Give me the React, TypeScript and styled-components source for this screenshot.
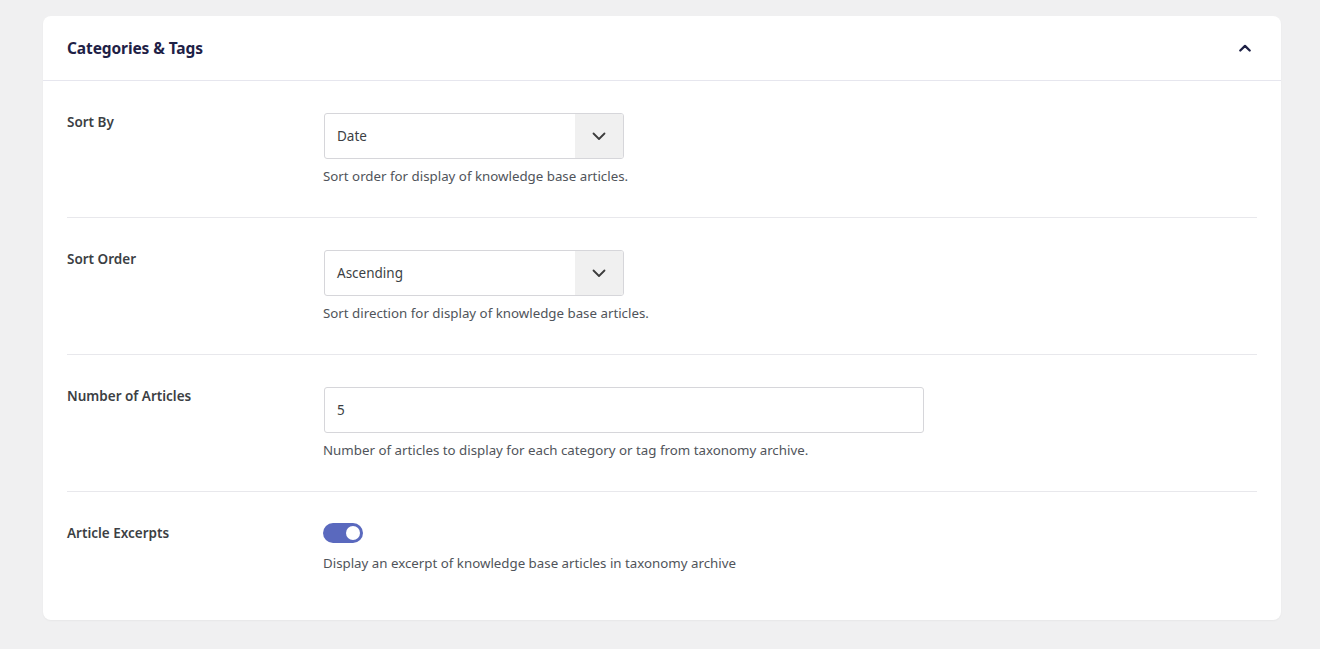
import React from "react";
import styled, { createGlobalStyle } from "styled-components";

const Global = createGlobalStyle`
  html, body { margin: 0; padding: 0; background: #f0f0f1; }
  body { font-family: "Noto Sans", "Open Sans", sans-serif; -webkit-font-smoothing: antialiased; }
  * { box-sizing: border-box; }
`;

const Page = styled.div`
  padding: 16px 39px 29px 43px;
`;

const Card = styled.section`
  background: #fff;
  border-radius: 8px;
  box-shadow: 0 1px 2px rgba(0, 0, 0, 0.04);
`;

const Header = styled.header`
  height: 65px;
  display: flex;
  align-items: center;
  justify-content: space-between;
  padding: 0 30px 0 24px;
  border-bottom: 1px solid #e6e6ee;
`;

const Title = styled.h2`
  margin: 0;
  font-size: 15.5px;
  font-weight: 700;
  color: #1e2146;
  letter-spacing: -0.1px;
`;

const Body = styled.div`
  padding: 0 24px 20px;
`;

const Row = styled.div<{ $last?: boolean }>`
  display: grid;
  grid-template-columns: 256px 1fr;
  padding: 32px 0 ${(p) => (p.$last ? "28px" : "32px")};
  border-bottom: ${(p) => (p.$last ? "none" : "1px solid #e8e8ec")};
`;

const Label = styled.div`
  font-size: 13.5px;
  font-weight: 600;
  color: #3c3f44;
  line-height: 18px;
`;

const Control = styled.div`
  display: flex;
  flex-direction: column;
  align-items: flex-start;
`;

const SelectBox = styled.div`
  width: 300px;
  height: 46px;
  border: 1px solid #d6d6da;
  border-radius: 3px;
  display: flex;
  overflow: hidden;
  margin-left: 1px;
`;

const SelectValue = styled.div`
  flex: 1;
  display: flex;
  align-items: center;
  padding-left: 12px;
  font-size: 13.5px;
  color: #3c3f44;
`;

const SelectArrow = styled.div`
  width: 48px;
  background: #f0f0f0;
  display: flex;
  align-items: center;
  justify-content: center;
  color: #3c3c3c;
`;

const TextInput = styled.div`
  width: 600px;
  height: 46px;
  border: 1px solid #d6d6da;
  border-radius: 3px;
  display: flex;
  align-items: center;
  padding-left: 12px;
  font-size: 13.5px;
  color: #3c3f44;
  margin-left: 1px;
`;

const Help = styled.p<{ $gap?: number }>`
  margin: ${(p) => p.$gap ?? 8}px 0 0;
  font-size: 13.3px;
  color: #50545a;
  line-height: 18px;
`;

const Toggle = styled.div<{ $on?: boolean }>`
  width: 40px;
  height: 20px;
  border-radius: 10px;
  background: ${(p) => (p.$on ? "#5a69be" : "#ccc")};
  position: relative;
  margin-top: -1px;
  &::after {
    content: "";
    position: absolute;
    top: 3px;
    left: ${(p) => (p.$on ? "23px" : "3px")};
    width: 14px;
    height: 14px;
    border-radius: 50%;
    background: #fff;
  }
`;

const Chevron = ({ up }: { up?: boolean }) => (
  <svg width={up ? 12 : 14} height={up ? 8 : 9} viewBox="0 0 14 9" fill="none">
    <path
      d={up ? "M1.5 7.5 L7 2 L12.5 7.5" : "M1.5 1.5 L7 7 L12.5 1.5"}
      stroke="currentColor"
      strokeWidth={up ? 2.6 : 1.8}
      strokeLinecap="round"
      strokeLinejoin="round"
    />
  </svg>
);

const CollapseBtn = styled.span`
  color: #1e2146;
  display: flex;
`;

export default function App() {
  return (
    <>
      <Global />
      <Page>
        <Card>
          <Header>
            <Title>Categories &amp; Tags</Title>
            <CollapseBtn>
              <Chevron up />
            </CollapseBtn>
          </Header>
          <Body>
            <Row>
              <Label>Sort By</Label>
              <Control>
                <SelectBox>
                  <SelectValue>Date</SelectValue>
                  <SelectArrow>
                    <Chevron />
                  </SelectArrow>
                </SelectBox>
                <Help>Sort order for display of knowledge base articles.</Help>
              </Control>
            </Row>
            <Row>
              <Label>Sort Order</Label>
              <Control>
                <SelectBox>
                  <SelectValue>Ascending</SelectValue>
                  <SelectArrow>
                    <Chevron />
                  </SelectArrow>
                </SelectBox>
                <Help>Sort direction for display of knowledge base articles.</Help>
              </Control>
            </Row>
            <Row>
              <Label>Number of Articles</Label>
              <Control>
                <TextInput>5</TextInput>
                <Help>Number of articles to display for each category or tag from taxonomy archive.</Help>
              </Control>
            </Row>
            <Row $last>
              <Label>Article Excerpts</Label>
              <Control>
                <Toggle $on />
                <Help $gap={11}>Display an excerpt of knowledge base articles in taxonomy archive</Help>
              </Control>
            </Row>
          </Body>
        </Card>
      </Page>
    </>
  );
}
